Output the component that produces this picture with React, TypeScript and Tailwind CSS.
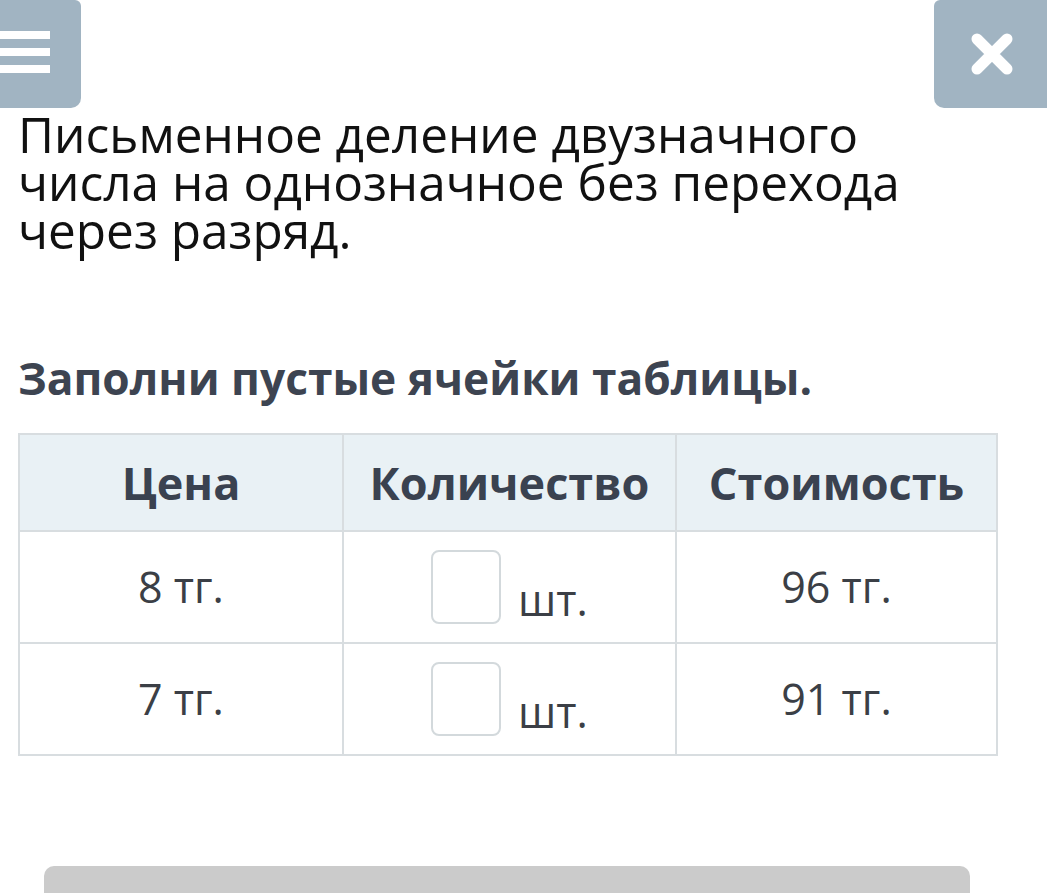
import { useState } from "react";

const rows = [
  { price: "8 тг.", total: "96 тг." },
  { price: "7 тг.", total: "91 тг." },
];

export default function App() {
  const [vals, setVals] = useState<string[]>(["", ""]);
  return (
    <div className="relative w-[1047px] h-[893px] overflow-hidden bg-white font-['Open_Sans',sans-serif]">
      <div className="flex justify-between h-[108px]">
        <button className="w-[81px] h-[108px] bg-[#a1b4c2] rounded-br-[10px] rounded-tr-[6px] flex flex-col gap-[9px] pr-[31px] pt-[31px]">
          <span className="block h-[8px] bg-white" />
          <span className="block h-[8px] bg-white" />
          <span className="block h-[8px] bg-white" />
        </button>
        <button className="w-[120px] h-[108px] bg-[#a1b4c2] rounded-bl-[10px] rounded-tl-[6px] -mr-[7px] flex items-center pl-[34px]">
          <svg width="48" height="48" viewBox="0 0 48 48">
            <path d="M9 9 L39 39 M39 9 L9 39" stroke="white" strokeWidth="11" strokeLinecap="round" />
          </svg>
        </button>
      </div>

      <div className="px-[18px]">
        <h1 className="w-[900px] mt-[2px] text-[49.5px] leading-[48px] text-[#111] font-normal">
          Письменное деление двузначного числа на однозначное без перехода через разряд.
        </h1>
        <h2 className="mt-[100px] text-[44.3px] leading-[48px] font-bold text-[#3d4451]">
          Заполни пустые ячейки таблицы.
        </h2>

        <table className="mt-[31px] w-[980px] border-collapse border-2 border-[#d8dde0] table-fixed">
          <thead>
            <tr className="bg-[#e9f1f5] h-[97px]">
              <th className="w-[324px] border-2 border-[#d8dde0] text-[45px] font-bold text-[#3a4250]">Цена</th>
              <th className="w-[333px] border-2 border-[#d8dde0] text-[45px] font-bold text-[#3a4250]">Количество</th>
              <th className="border-2 border-[#d8dde0] text-[45px] font-bold text-[#3a4250]">Стоимость</th>
            </tr>
          </thead>
          <tbody>
            {rows.map((r, i) => (
              <tr key={i} className="h-[112px]">
                <td className="border-2 border-[#d8dde0] text-center text-[43px] text-[#3b3f46]">{r.price}</td>
                <td className="border-2 border-[#d8dde0]">
                  <div className="flex items-end justify-center gap-[17px]">
                    <input
                      value={vals[i]}
                      onChange={(e) => setVals(vals.map((v, j) => (j === i ? e.target.value : v)))}
                      className="w-[70px] h-[74px] rounded-[8px] border-2 border-[#d3d9dc] bg-white text-center text-[36px] outline-none"
                    />
                    <span className="text-[43px] leading-[43px] text-[#3b3f46] mb-[3px]">шт.</span>
                  </div>
                </td>
                <td className="border-2 border-[#d8dde0] text-center text-[43px] text-[#3b3f46]">{r.total}</td>
              </tr>
            ))}
          </tbody>
        </table>
      </div>

      <div className="absolute left-[44px] top-[866px] w-[926px] h-[40px] bg-[#cbcbcb] rounded-t-[10px]" />
    </div>
  );
}
